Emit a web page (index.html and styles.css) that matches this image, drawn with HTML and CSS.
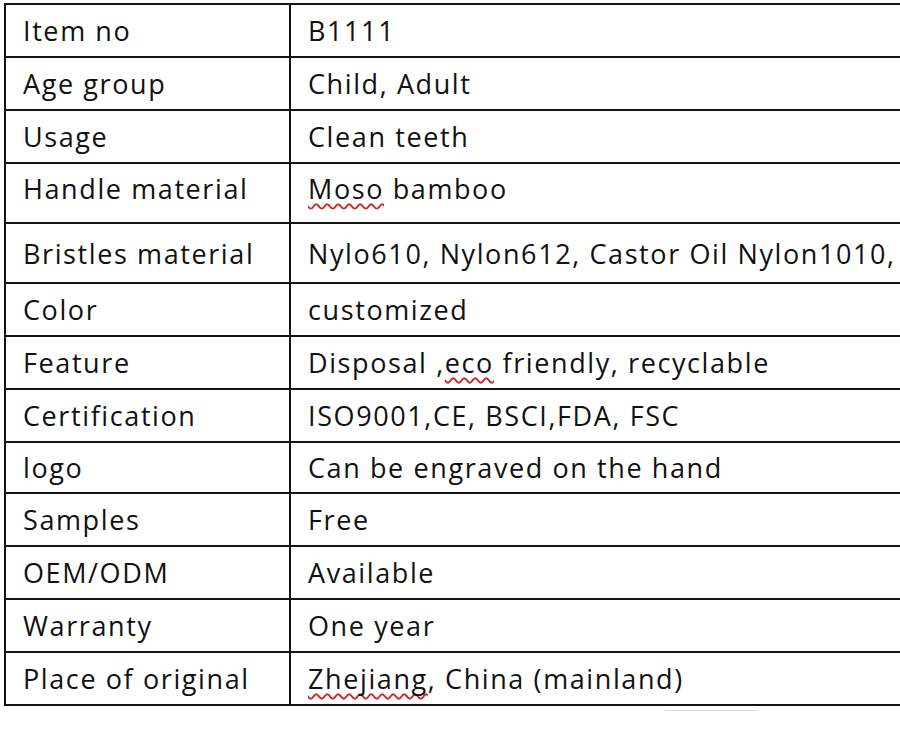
FILE: index.html
```html
<!DOCTYPE html>
<html lang="en">
<head>
<meta charset="utf-8">
<title>Product specification</title>
<link rel="stylesheet" href="styles.css">
</head>
<body>
<div class="sheet">
  <table class="spec">
    <tbody>
      <tr><td class="key">Item no</td><td class="val">B1111</td></tr>
      <tr><td class="key">Age group</td><td class="val">Child, Adult</td></tr>
      <tr><td class="key">Usage</td><td class="val">Clean teeth</td></tr>
      <tr class="tall lift"><td class="key">Handle material</td><td class="val"><span class="spell">Moso</span> bamboo</td></tr>
      <tr class="tall"><td class="key">Bristles material</td><td class="val">Nylo610, Nylon612, Castor Oil Nylon1010,</td></tr>
      <tr><td class="key">Color</td><td class="val">customized</td></tr>
      <tr><td class="key">Feature</td><td class="val">Disposal ,<span class="spell">eco</span> friendly, recyclable</td></tr>
      <tr><td class="key">Certification</td><td class="val">ISO9001,CE, BSCI,FDA, FSC</td></tr>
      <tr class="short"><td class="key">logo</td><td class="val">Can be engraved on the hand</td></tr>
      <tr><td class="key">Samples</td><td class="val">Free</td></tr>
      <tr><td class="key">OEM/ODM</td><td class="val">Available</td></tr>
      <tr><td class="key">Warranty</td><td class="val">One year</td></tr>
      <tr><td class="key">Place of original</td><td class="val"><span class="spell">Zhejiang</span>, China (mainland)</td></tr>
    </tbody>
  </table>
  <div class="mark"></div>
</div>
</body>
</html>
```
FILE: styles.css
```css
html, body {
  margin: 0;
  padding: 0;
  background: #ffffff;
}
body {
  width: 900px;
  height: 750px;
  overflow: hidden;
  font-family: "Open Sans", Lato, sans-serif;
  color: #111111;
}
.sheet {
  padding: 3px 0 0 4px;
}
.spec {
  border-collapse: collapse;
  width: 896px;
  table-layout: fixed;
  font-size: 27px;
  font-weight: 500;
  letter-spacing: 1.6px;
}
.spec td {
  border: 2px solid #141414;
  height: 53px;
  padding: 0 0 0 17px;
  box-sizing: border-box;
  white-space: nowrap;
  overflow: hidden;
  vertical-align: middle;
}
.spec .val {
  border-right: none;
}
.spec .key {
  width: 285px;
}
.spec .tall td {
  height: 60px;
}
.spec .lift td {
  padding-bottom: 10px;
}
.spec .short td {
  height: 51px;
}
.spell {
  text-decoration: underline wavy #d42424;
  text-decoration-thickness: 1.5px;
  text-decoration-skip-ink: none;
  text-underline-offset: 4px;
}
.mark {
  margin: 4px 0 0 661px;
  width: 92px;
  height: 1px;
  background: #d8d8d8;
}
```
